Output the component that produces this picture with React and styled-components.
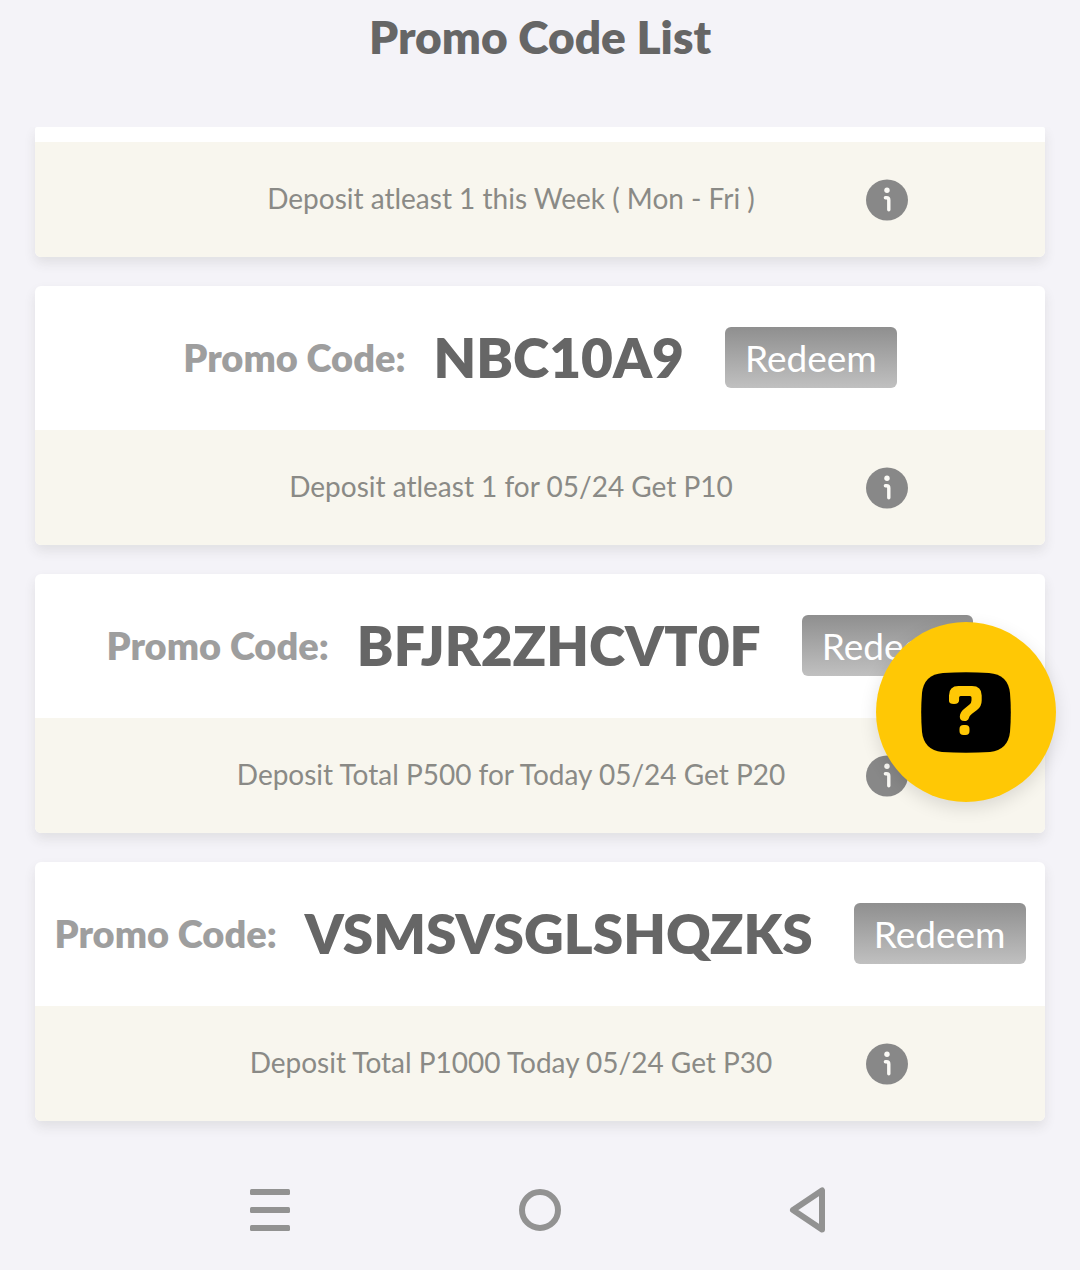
import React from "react";
import styled, { createGlobalStyle } from "styled-components";

const GlobalStyle = createGlobalStyle`
  * {
    box-sizing: border-box;
  }

  body {
    margin: 0;
    background: #f4f3f8;
    font-family: Lato, "Open Sans", sans-serif;
  }
`;

const Page = styled.div`
  display: flex;
  flex-direction: column;
  min-height: 100vh;
`;

const Header = styled.header`
  padding: 9px 20px 62px;
  text-align: center;
`;

const Title = styled.h1`
  margin: 0;
  font-size: 46px;
  font-weight: 800;
  line-height: 56px;
  color: #666666;
`;

const List = styled.main`
  flex: 1;
  display: flex;
  flex-direction: column;
  gap: 29px;
  padding: 0 35px 29px;
  overflow: hidden;
`;

const Card = styled.section`
  border-radius: 6px;
  background: #ffffff;
  box-shadow: 0 6px 12px rgba(60, 60, 50, 0.1);

  &:first-child {
    border-top-left-radius: 2px;
    border-top-right-radius: 2px;
    padding-top: 15px;
  }
`;

const CodeRow = styled.div`
  display: flex;
  align-items: center;
  justify-content: center;
  height: 144px;
  padding-bottom: 2px;
  white-space: nowrap;
`;

const Label = styled.span`
  margin-right: 28px;
  font-size: 38px;
  font-weight: 800;
  color: #9e9e9e;
`;

const Code = styled.strong`
  margin-right: 41px;
  font-size: 55px;
  font-weight: 800;
  color: #666666;
`;

const RedeemButton = styled.button`
  height: 61px;
  padding: 0 20px;
  border: none;
  border-radius: 6px;
  background: linear-gradient(#8f8f8f, #c0c0c0);
  color: #ffffff;
  font-family: inherit;
  font-size: 37px;
  cursor: pointer;
`;

const Details = styled.div`
  padding: 0 20px;
  border-radius: 0 0 6px 6px;
  background: #f8f6ee;
`;

const DetailsInner = styled.div`
  display: grid;
  grid-template-columns: 1fr 58px;
  align-items: center;
  justify-items: center;
  max-width: 752px;
  height: 115px;
  margin: 0 auto;
`;

const Description = styled.p`
  margin: 0;
  padding-bottom: 3px;
  font-size: 28px;
  line-height: 36px;
  color: #8a8a86;
`;

const IconButton = styled.button`
  display: flex;
  padding: 0;
  border: none;
  background: none;
  cursor: pointer;
`;

const HelpButton = styled.button`
  position: fixed;
  right: 24px;
  bottom: 468px;
  display: flex;
  align-items: center;
  justify-content: center;
  width: 180px;
  height: 180px;
  padding: 0;
  border: none;
  border-radius: 50%;
  background: #ffc805;
  box-shadow: 0 6px 18px rgba(0, 0, 0, 0.12);
  cursor: pointer;
`;

const NavBar = styled.nav`
  display: grid;
  grid-template-columns: repeat(3, 1fr);
  align-items: center;
  justify-items: center;
  height: 120px;
  padding: 0 12.5%;
`;

const InfoIcon = () => (
  <svg width="42" height="42" viewBox="0 0 42 42" fill="none">
    <ellipse cx="21" cy="21" rx="21" ry="20.5" fill="#888888" />
    <circle cx="21" cy="11.2" r="2.7" fill="#fbfaf6" />
    <path
      d="M19.4 18.7h1.2q2.2 0 2.2 2.2v9.8"
      stroke="#fbfaf6"
      strokeWidth="3.4"
      strokeLinecap="round"
    />
  </svg>
);

const HelpIcon = () => (
  <svg width="90" height="81" viewBox="0 0 90 81" fill="none">
    <path
      d="M22 1Q45 -0.4 68 1Q87 2.5 89 21Q90.6 40 89 60Q87 78 69 80Q45 81.6 21 80Q3 78 1 60Q-0.6 40 1 21Q3 2.5 22 1Z"
      fill="#000000"
    />
    <path
      d="M28 29V23.500Q28 14 37.500 14H51Q60.700 14 60.700 23.500V28.500Q60.700 34.500 56 38L51 41.800Q48.500 43.700 47.800 46.200Q46.900 49 43.500 49Q38.800 49 38.800 44.800Q38.800 40.500 43 37L48.500 32.600Q50.500 31 50.500 28.300V25.500Q50.500 24 49 24H39.600Q38.100 24 38.100 25.500V28Q38.100 32 33 32Q28 32 28 29Z"
      fill="#ffc805"
    />
    <rect x="38.500" y="53" width="10" height="10" rx="4" fill="#ffc805" />
  </svg>
);

const MenuIcon = () => (
  <svg width="40" height="42" viewBox="0 0 40 42" fill="#929292">
    <rect width="40" height="6" rx="1.5" />
    <rect y="18" width="40" height="6" rx="1.5" />
    <rect y="36" width="40" height="6" rx="1.5" />
  </svg>
);

const HomeIcon = () => (
  <svg width="42" height="42" viewBox="0 0 42 42" fill="none">
    <circle cx="21" cy="21" r="18" stroke="#929292" strokeWidth="6" />
  </svg>
);

const BackIcon = () => (
  <svg width="42" height="46" viewBox="0 0 42 46" fill="none">
    <path
      d="M33 3.5v39L4 23z"
      stroke="#929292"
      strokeWidth="6"
      strokeLinejoin="round"
    />
  </svg>
);

const promos = [
  { id: 1, description: "Deposit atleast 1 this Week ( Mon - Fri )" },
  {
    id: 2,
    code: "NBC10A9",
    description: "Deposit atleast 1 for 05/24 Get P10",
  },
  {
    id: 3,
    code: "BFJR2ZHCVT0F",
    description: "Deposit Total P500 for Today 05/24 Get P20",
  },
  {
    id: 4,
    code: "VSMSVSGLSHQZKS",
    description: "Deposit Total P1000 Today 05/24 Get P30",
  },
];

function PromoCard({ code, description }) {
  return (
    <Card>
      {code && (
        <CodeRow>
          <Label>Promo Code:</Label>
          <Code>{code}</Code>
          <RedeemButton type="button">Redeem</RedeemButton>
        </CodeRow>
      )}
      <Details>
        <DetailsInner>
          <Description>{description}</Description>
          <IconButton type="button" aria-label="Details">
            <InfoIcon />
          </IconButton>
        </DetailsInner>
      </Details>
    </Card>
  );
}

function App() {
  return (
    <Page>
      <GlobalStyle />
      <Header>
        <Title>Promo Code List</Title>
      </Header>
      <List>
        {promos.map((promo) => (
          <PromoCard
            key={promo.id}
            code={promo.code}
            description={promo.description}
          />
        ))}
      </List>
      <NavBar>
        <IconButton type="button" aria-label="Recent apps">
          <MenuIcon />
        </IconButton>
        <IconButton type="button" aria-label="Home">
          <HomeIcon />
        </IconButton>
        <IconButton type="button" aria-label="Back">
          <BackIcon />
        </IconButton>
      </NavBar>
      <HelpButton type="button" aria-label="Help">
        <HelpIcon />
      </HelpButton>
    </Page>
  );
}

export default App;
